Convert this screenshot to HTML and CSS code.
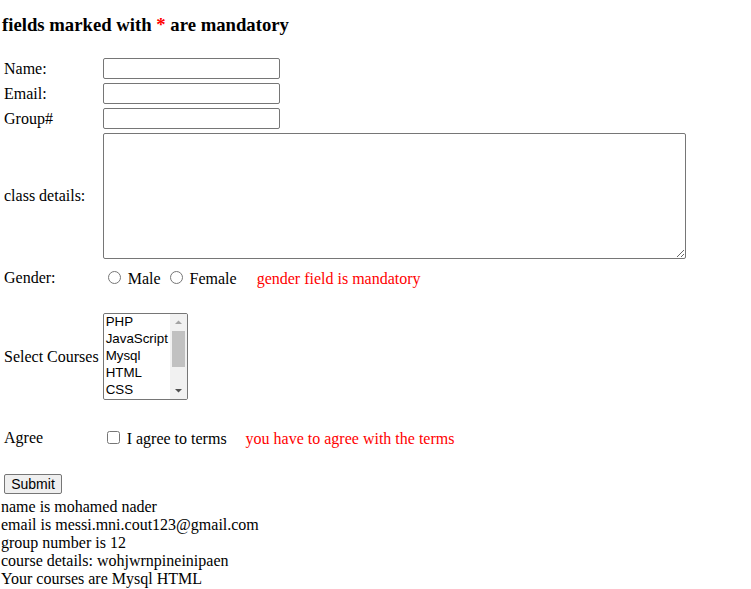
FILE: index.html
```html
<!DOCTYPE html>
<html>
<head>
<meta charset="utf-8">
<title>Form</title>
<link rel="stylesheet" href="styles.css">
</head>
<body>
<h3 class="title">fields marked with <span class="star">*</span> are mandatory</h3>
<form class="form">
<table class="form-table">
  <tr class="row-field">
    <td class="label">Name:</td>
    <td><input class="text-input" type="text" name="name"></td>
  </tr>
  <tr class="row-field">
    <td class="label">Email:</td>
    <td><input class="text-input" type="text" name="email"></td>
  </tr>
  <tr class="row-field">
    <td class="label">Group#</td>
    <td><input class="text-input" type="text" name="group"></td>
  </tr>
  <tr class="row-field">
    <td class="label">class details:</td>
    <td><textarea class="details" name="details"></textarea></td>
  </tr>
  <tr class="row-gender">
    <td class="label">Gender:</td>
    <td><input class="radio" type="radio" name="gender"> Male <input class="radio" type="radio" name="gender"> Female <span class="error error-gender">gender field is mandatory</span></td>
  </tr>
  <tr class="row-courses">
    <td class="label">Select Courses</td>
    <td>
      <div class="listbox">
        <select class="courses" name="courses" multiple size="5">
          <option>PHP</option>
          <option>JavaScript</option>
          <option>Mysql</option>
          <option>HTML</option>
          <option>CSS</option>
          <option>Python</option>
          <option>Java</option>
          <option>C++</option>
          <option>Laravel</option>
        </select>
        <div class="scrollbar">
          <svg class="scroll-btn" width="17" height="17" viewBox="0 0 17 17"><polygon points="5,10 12,10 8.5,6.5" fill="#a3a3a3"/></svg>
          <div class="scroll-track"><div class="scroll-thumb"></div></div>
          <svg class="scroll-btn" width="17" height="17" viewBox="0 0 17 17"><polygon points="5,7 12,7 8.5,10.5" fill="#505050"/></svg>
        </div>
      </div>
    </td>
  </tr>
  <tr class="row-agree">
    <td class="label">Agree</td>
    <td><input class="check" type="checkbox" name="agree"> I agree to terms <span class="error error-agree">you have to agree with the terms</span></td>
  </tr>
</table>
<input class="submit" type="submit" value="Submit">
</form>
<div class="output">
  <div>name is mohamed nader</div>
  <div>email is messi.mni.cout123@gmail.com</div>
  <div>group number is 12</div>
  <div>course details: wohjwrnpineinipaen</div>
  <div>Your courses are Mysql HTML</div>
</div>
</body>
</html>
```
FILE: styles.css
```css
html, body {
  background: #fff;
}
body {
  margin: 0 0 0 1px;
  font-family: "Liberation Serif", "Times New Roman", serif;
  font-size: 16px;
  color: #000;
}
.title {
  font-size: 18.72px;
  font-weight: bold;
  margin: 14px 0 19px 1px;
  line-height: normal;
}
.star {
  color: red;
}
.form {
  margin: 0;
}
.form-table {
  border-spacing: 2px;
  font-size: 16px;
  line-height: normal;
}
.form-table td {
  padding: 1px;
  vertical-align: middle;
}
.label {
  white-space: nowrap;
}
.text-input {
  display: block;
  box-sizing: border-box;
  width: 177px;
  height: 21px;
  margin: 0;
  border: 1px solid #767676;
  border-radius: 2px;
  padding: 1px 2px;
  font: 13.33px "Liberation Sans", Arial, sans-serif;
}
.details {
  display: block;
  box-sizing: border-box;
  width: 583px;
  height: 126px;
  margin: 0;
  border: 1px solid #767676;
  border-radius: 2px;
  padding: 2px;
  font: 13.33px "Liberation Mono", monospace;
}
.row-gender td {
  padding: 6px 1px 6px 1px;
}
.row-courses td {
  padding: 17px 1px 17px 1px;
}
.row-agree td {
  padding: 9px 1px 10px 1px;
}
.radio {
  margin: 3px 3px 0 5px;
}
.check {
  margin: 3px 3px 3px 4px;
}
.error {
  color: red;
}
.error-gender {
  margin-left: 16px;
}
.error-agree {
  margin-left: 15px;
}
.listbox {
  display: flex;
  box-sizing: border-box;
  width: 85px;
  height: 87px;
  border: 1px solid #767676;
  border-radius: 2px;
  background: #fff;
  overflow: hidden;
}
.courses {
  display: block;
  width: 66px;
  height: 85px;
  box-sizing: border-box;
  margin: 0;
  padding: 0;
  border: none;
  outline: none;
  font: 13.33px "Liberation Sans", Arial, sans-serif;
  color: #000;
  background: #fff;
  overflow: hidden;
  scrollbar-width: none;
}
.courses::-webkit-scrollbar {
  display: none;
}
.courses option {
  padding: 0 2px 1px;
}
.scrollbar {
  width: 17px;
  height: 85px;
  background: #f1f1f1;
  display: flex;
  flex-direction: column;
}
.scroll-btn {
  display: block;
  flex: none;
}
.scroll-track {
  flex: 1;
  padding: 0 2px;
}
.scroll-thumb {
  height: 36px;
  background: #c1c1c1;
}
.submit {
  display: block;
  margin: 14px 0 0 3px;
  width: 58px;
  height: 20px;
  box-sizing: border-box;
  padding: 1px 6px;
  font: 14px "Liberation Sans", Arial, sans-serif;
  color: #000;
  background: #efefef;
  border: 1px solid #767676;
  border-radius: 2px;
}
.output {
  margin-top: 4px;
  line-height: 18px;
}
```
